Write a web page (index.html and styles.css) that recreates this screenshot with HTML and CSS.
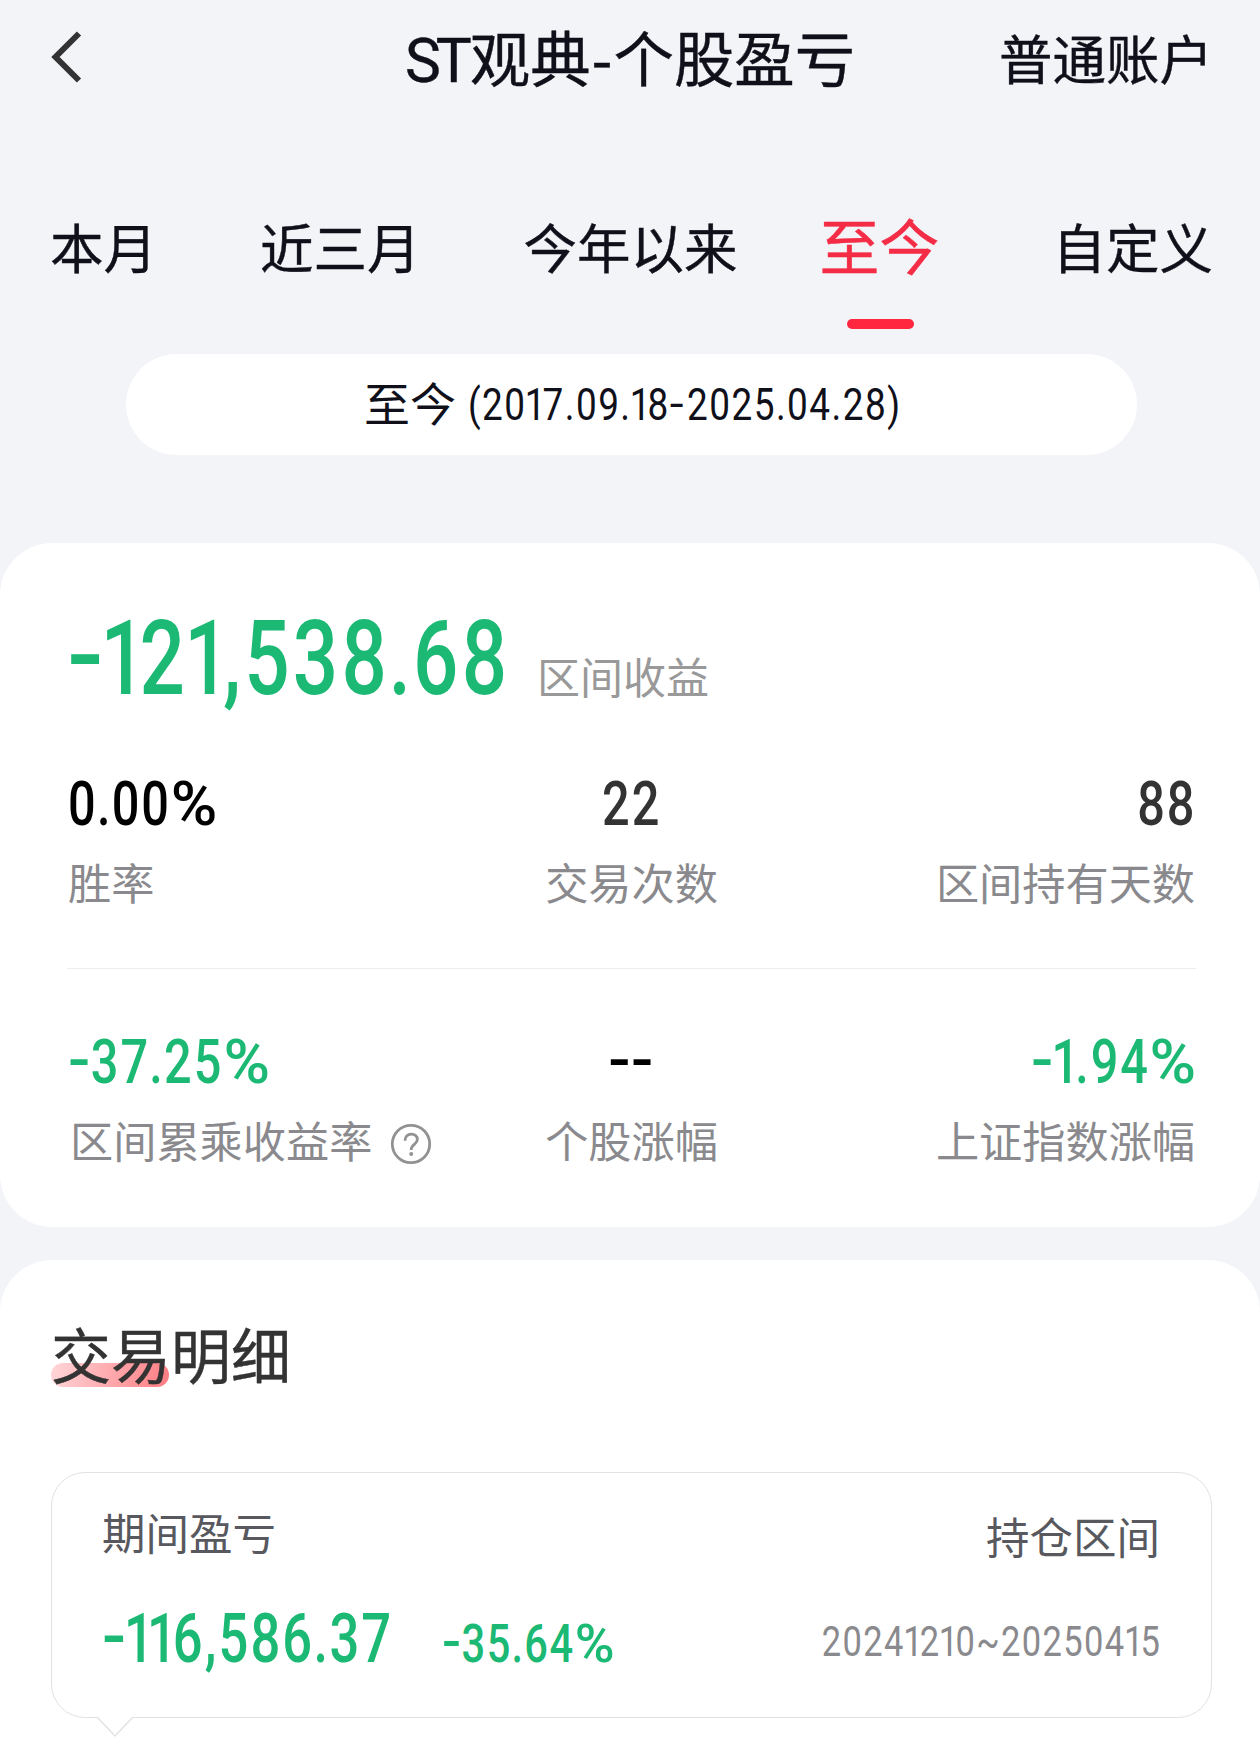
FILE: index.html
```html
<!DOCTYPE html>
<html lang="zh-CN">
<head>
    <meta charset="UTF-8">
    <meta name="viewport" content="width=device-width, initial-scale=1.0">
    <title>ST观典-个股盈亏</title>
    <link rel="stylesheet" href="styles.css">
</head>
<body>
    <header class="header">
        <svg class="back" width="38" height="56" viewBox="0 0 38 56">
            <path d="M32 4.5 L8.5 28 L32 51.5" fill="none" stroke="#333" stroke-width="6"/>
        </svg>
        <h1 class="title"><span class="latin">ST</span>观典<span class="hyphen">-</span>个股盈亏</h1>
        <div class="account">普通账户</div>
    </header>

    <nav class="tabs">
        <a class="tab">本月</a>
        <a class="tab">近三月</a>
        <a class="tab">今年以来</a>
        <a class="tab active">至今</a>
        <a class="tab">自定义</a>
    </nav>

    <div class="range">
        <span class="range-name">至今</span>
        <span class="num range-date">(20<i class="one">1</i>7.09.<i class="one">1</i>8<i class="minus">-</i>2025.04.28)</span>
    </div>

    <section class="card summary">
        <div class="profit">
            <div class="profit-value"><span class="num green"><i class="minus">-</i><i class="one">1</i>2<i class="one">1</i>,538<i class="dot">.</i>68</span></div>
            <div class="profit-label">区间收益</div>
        </div>
        <div class="stats">
            <div class="stat">
                <div class="value"><span class="num black">0<i class="dot">.</i>00<i class="pct">%</i></span></div>
                <div class="label">胜率</div>
            </div>
            <div class="stat center">
                <div class="value"><span class="num">22</span></div>
                <div class="label">交易次数</div>
            </div>
            <div class="stat right">
                <div class="value"><span class="num trim">88</span></div>
                <div class="label">区间持有天数</div>
            </div>
        </div>
        <div class="line"></div>
        <div class="stats">
            <div class="stat">
                <div class="value"><span class="num green"><i class="minus">-</i>37<i class="dot">.</i>25<i class="pct">%</i></span></div>
                <div class="label with-help">区间累乘收益率
                    <svg width="42" height="42" viewBox="0 0 42 42" fill="none" stroke="#929292" stroke-width="2.8">
                        <circle cx="21" cy="21" r="18.7"/>
                        <path d="M15 17.8 C15 9 27.4 9 27.4 16.6 C27.4 21.4 21.2 20.8 21.2 27"/>
                        <circle cx="21.2" cy="31" r="2" fill="#929292" stroke="none"/>
                    </svg>
                </div>
            </div>
            <div class="stat center">
                <div class="value"><span class="num black"><i class="minus">-</i><i class="minus">-</i></span></div>
                <div class="label">个股涨幅</div>
            </div>
            <div class="stat right">
                <div class="value"><span class="num green"><i class="minus">-</i><i class="one">1</i>.94<i class="pct">%</i></span></div>
                <div class="label">上证指数涨幅</div>
            </div>
        </div>
    </section>

    <section class="card detail">
        <h2 class="detail-title"><span class="mark">交易</span>明细</h2>
        <div class="record">
            <div class="record-left">
                <div class="record-label">期间盈亏</div>
                <div class="record-values">
                    <div class="amount"><span class="num green"><i class="minus">-</i><i class="one">1</i><i class="one">1</i>6,586<i class="dot">.</i>37</span></div>
                    <div class="percent"><span class="num green"><i class="minus">-</i>35<i class="dot">.</i>64<i class="pct">%</i></span></div>
                </div>
            </div>
            <div class="record-right">
                <div class="record-label">持仓区间</div>
                <div class="period"><span class="num trim">2024<i class="one">1</i>2<i class="one">1</i>0~202504<i class="one">1</i>5</span></div>
            </div>
            <svg class="arrow" width="38" height="21" viewBox="0 0 38 21">
                <path d="M1 0 L19 19 L37 0" fill="#fff" stroke="#e2e2e4" stroke-width="1.4"/>
            </svg>
        </div>
    </section>
</body>
</html>
```

FILE: styles.css
```css
*{
    margin: 0;
    padding: 0;
    box-sizing: border-box;
}
body{
    width: 1260px;
    height: 1753px;
    overflow: hidden;
    background: #f3f4f8;
    color: #0f101a;
    font-family: "Noto Sans CJK SC", sans-serif;
}
h1, h2{
    font-weight: 400;
}
i{
    font-style: normal;
}

/* narrow digits */
.num{
    display: inline-block;
    font-weight: 500;
    letter-spacing: 0.04em;
    white-space: nowrap;
    transform: scaleX(0.785);
    transform-origin: left center;
}
.num, .profit-value, .value, .amount, .percent, .period{
    font-family: Roboto, sans-serif;
}
.minus{
    display: inline-block;
    width: 0.47em;
    letter-spacing: 0;
    text-align: left;
    transform: translateY(-0.03em) scaleX(1.35);
    transform-origin: left center;
}
.one{
    margin-left: -0.05em;
    margin-right: -0.12em;
}
.dot{
    margin: 0 -0.015em;
}
.pct{
    display: inline-block;
    width: 0.93em;
    letter-spacing: 0;
    text-align: left;
    transform: scaleX(1.3);
    transform-origin: left center;
}
.trim{
    margin-right: -0.03em;
}
.green{
    color: #1bb974;
}
.black{
    color: #000;
}

.header{
    display: grid;
    grid-template-columns: 1fr auto 1fr;
    align-items: center;
    height: 108px;
    padding: 4px 47px 0;
    -webkit-text-stroke: 0.4px;
}
.back{
    margin-top: 2px;
}
.title{
    margin-top: 5px;
    font-size: 60.4px;
    line-height: 60px;
}
.title .latin{
    font-family: Roboto, sans-serif;
    letter-spacing: -5px;
    margin-right: 3px;
}
.title .hyphen{
    margin: 0 1px;
}
.account{
    margin-top: 2px;
    font-size: 53.5px;
    line-height: 54px;
    text-align: right;
}

.tabs{
    display: flex;
    gap: 103px;
    height: 80px;
    margin: 98px 0 68px;
    padding-left: 50px;
    -webkit-text-stroke: 0.4px;
}
.tab{
    font-size: 53.5px;
    line-height: 80px;
    white-space: nowrap;
}
.tab.active{
    position: relative;
    margin: 0 10px 0 -21px;
    font-size: 60px;
    line-height: 76px;
    color: #f42c45;
}
.tab.active::after{
    content: "";
    position: absolute;
    left: 27px;
    top: 113px;
    width: 67px;
    height: 10px;
    border-radius: 5px;
    background: #ff2640;
}

.range{
    display: flex;
    align-items: center;
    height: 101px;
    margin: 0 123px 0 126px;
    padding-left: 238px;
    border-radius: 51px;
    background: #fff;
    font-size: 46px;
    line-height: 46px;
}
.range-name{
    margin-top: -7px;
}
.range-date{
    margin-left: 12px;
    font-size: 45px;
    font-weight: 400;
    transform: scaleX(0.82);
}

.card{
    border-radius: 52px;
    background: #fff;
}
.summary{
    height: 684px;
    margin-top: 88px;
    padding: 64px 64px 0 67px;
}
.profit{
    display: flex;
    align-items: baseline;
    height: 104px;
}
.profit-value{
    width: 470px;
    font-size: 104px;
    line-height: 104px;
}
.profit-value .num{
    transform: scaleX(0.768);
}
.profit-label{
    font-size: 43px;
    line-height: 43px;
    color: #999;
}
.stats{
    display: flex;
    margin-top: 62px;
    padding: 0 1px;
}
.stat{
    flex: 1;
    color: #333;
}
.center{
    text-align: center;
}
.center .num{
    transform-origin: center;
}
.right{
    text-align: right;
}
.right .num{
    transform-origin: right center;
}
.value{
    height: 62px;
    font-size: 62px;
    line-height: 62px;
}
.label{
    height: 43px;
    margin-top: 25px;
    font-size: 43.2px;
    line-height: 43px;
    color: #8a8a8e;
    white-space: nowrap;
}
.with-help{
    display: flex;
    align-items: center;
    gap: 18px;
    padding-left: 2px;
}
.with-help svg{
    margin-top: 8px;
}
.line{
    height: 1px;
    margin-top: 65px;
    background: #ededee;
}

.detail{
    height: 560px;
    margin-top: 33px;
    padding: 63px 48px 0 51px;
}
.detail-title{
    font-size: 60px;
    line-height: 60px;
    color: #333;
    -webkit-text-stroke: 0.4px;
}
.mark{
    position: relative;
    z-index: 0;
}
.mark::before{
    content: "";
    position: absolute;
    z-index: -1;
    left: 0;
    bottom: 9px;
    width: 118px;
    height: 24px;
    border-radius: 12px;
    background: linear-gradient(100deg, #ffd6d9, #ff7d82);
}
.record{
    position: relative;
    display: flex;
    justify-content: space-between;
    height: 246px;
    margin-top: 89px;
    padding: 37px 51px 0 50px;
    border: 1px solid #e2e2e4;
    border-radius: 34px;
}
.record-label{
    font-size: 43.5px;
    line-height: 44px;
    color: #58585f;
}
.record-values{
    display: flex;
    align-items: baseline;
    margin-top: 51px;
}
.amount{
    width: 340px;
    font-size: 68px;
    line-height: 68px;
}
.amount .num{
    transform: scaleX(0.772);
}
.percent{
    font-size: 53px;
    line-height: 53px;
}
.record-right{
    padding-top: 4px;
    text-align: right;
}
.period{
    margin-top: 62px;
    font-size: 43px;
    line-height: 43px;
    color: #8a8a8e;
}
.period .num{
    font-weight: 400;
    transform: scaleX(0.802);
    transform-origin: right center;
}
.arrow{
    position: absolute;
    left: 44px;
    top: 244px;
}
```
